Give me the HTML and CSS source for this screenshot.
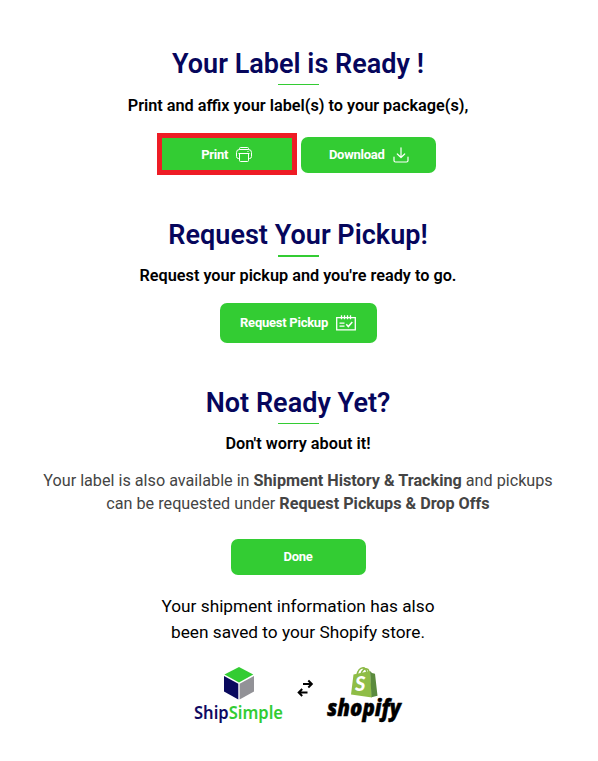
FILE: index.html
```
<!DOCTYPE html>
<html lang="en">
<head>
    <meta charset="UTF-8">
    <meta name="viewport" content="width=device-width, initial-scale=1.0">
    <title>Your Label is Ready</title>
    <link rel="stylesheet" href="styles.css">
</head>
<body>
<main class="page">
    <section class="block label-block">
        <h2 class="title">Your Label is Ready !</h2>
        <div class="line"></div>
        <p class="subtitle">Print and affix your label(s) to your package(s),</p>
        <div class="buttons">
            <button class="btn btn-print">
                <span class="btn-text">Print</span>
                <svg width="16" height="16" viewBox="0 0 16 16" fill="none" stroke="#fff" stroke-width="1">
                    <path d="M3.5 3.5v-1q0-1 1-1h7q1 0 1 1v1M3.5 12.5h-1q-2 0-2-2v-4q0-3 3-3h9q3 0 3 3v4q0 2-2 2h-1M2.5 7.5h11"/>
                    <path d="M3.5 7.5v7q0 1 1 1h7q1 0 1-1v-7M11.5 5.5h1"/>
                </svg>
            </button>
            <button class="btn btn-download">
                <span class="btn-text">Download</span>
                <svg width="16" height="16" viewBox="0 0 16 16" fill="none" stroke="#fff" stroke-width="1.2" stroke-linecap="round" stroke-linejoin="round">
                    <path d="M8 .8v9.6M4.3 7L8 10.5 11.7 7M1 10v3.5q0 1.5 1.5 1.5h11q1.5 0 1.5-1.5V10"/>
                </svg>
            </button>
        </div>
    </section>

    <section class="block pickup-block">
        <h2 class="title">Request Your Pickup!</h2>
        <div class="line line-thick"></div>
        <p class="subtitle">Request your pickup and you're ready to go.</p>
        <div class="buttons">
            <button class="btn btn-pickup">
                <span class="btn-text">Request Pickup</span>
                <svg width="20" height="16" viewBox="0 0 20 16" fill="none" stroke="#fff" stroke-width="1.3">
                    <path d="M.7 2.6h18.6v12.3H.7z"/>
                    <path d="M5.5.3v4M8.500.3v4M11.500.3v4M14.500.3v4M3.500 8.200h5M3.500 11.200h5"/>
                    <path d="M10.3 9.3l2 2.2 4-4.6" stroke-width="1.5"/>
                </svg>
            </button>
        </div>
    </section>

    <section class="block later-block">
        <h2 class="title">Not Ready Yet?</h2>
        <div class="line"></div>
        <p class="subtitle">Don't worry about it!</p>
        <p class="info">Your label is also available in <b>Shipment History &amp; Tracking</b> and pickups<br>can be requested under <b>Request Pickups &amp; Drop Offs</b></p>
        <div class="buttons">
            <button class="btn btn-done"><span class="btn-text">Done</span></button>
        </div>
    </section>

    <p class="saved">Your shipment information has also<br>been saved to your Shopify store.</p>

    <div class="logos">
        <svg class="logo-shipsimple" width="92" height="66" viewBox="0 0 92 66">
            <path fill="#3c3" d="M46 1l14.3 7.6L46 16.4 31.4 8.6z"/>
            <path fill="#0a0a5e" d="M31 10l14.3 7.7v15.8L31 25.6z"/>
            <path fill="#929297" d="M61 10l-14.4 7.7v15.8L61 25.6z"/>
            <text x="1" y="53" class="ship-text" textLength="89" lengthAdjust="spacingAndGlyphs"><tspan fill="#100a62">Ship</tspan><tspan fill="#3c3">Simple</tspan></text>
        </svg>
        <svg class="arrows" width="16" height="18" viewBox="0 0 16 18" fill="none" stroke="#000" stroke-width="2">
            <path d="M6 5h8.500M11.300 1.500L14.800 5l-3.500 3.500M10.500 13.500H2M5.200 10l-3.500 3.500L5.200 17"/>
        </svg>
        <svg class="logo-shopify" width="77" height="66" viewBox="0 0 77 66">
            <path fill="none" stroke="#8bb944" stroke-width="1.5" d="M31 9C32 4 35 2 37 1.800q3 0 4 5M35 8c1-4 4-6 6-5 2 .5 2 3 2 4"/>
            <path fill="#8fbd46" d="M27.500 8.500L44 5l2 26.500L25 28.500z"/>
            <path fill="#5b8b3d" d="M44 5l2 2 3 .8 2.500 22-6 1.500z"/>
            <text x="29" y="25" class="bag-text">S</text>
            <text x="1" y="50" class="shopify-text" textLength="74" lengthAdjust="spacingAndGlyphs">shopify</text>
        </svg>
    </div>
</main>
</body>
</html>
```
FILE: styles.css
```
body {
    margin: 0;
    background: #fff;
    font-family: Roboto, Arial, sans-serif;
    color: #000;
}

.page {
    width: 596px;
    padding-top: 46px;
    text-align: center;
}

.title {
    margin: 0;
    font-size: 27px;
    line-height: 36px;
    font-weight: 600;
    letter-spacing: 0.03px;
    color: #06065c;
}

.line {
    width: 41px;
    height: 1px;
    margin: 2px auto 0;
    background: #3c3;
}

.line-thick {
    height: 2px;
}

.subtitle {
    margin: 11px 0 0;
    font-size: 16.25px;
    line-height: 20px;
    font-weight: 600;
}

.buttons {
    display: flex;
    justify-content: center;
    gap: 4.5px;
    align-items: center;
}

.btn {
    display: flex;
    align-items: center;
    justify-content: center;
    gap: 8px;
    box-sizing: border-box;
    width: 135px;
    height: 36px;
    padding: 0;
    border: none;
    border-radius: 7px;
    background: #3c3;
    color: #fff;
    font-family: inherit;
    font-size: 13px;
    font-weight: 700;
    letter-spacing: -0.25px;
    cursor: pointer;
}

.label-block .buttons {
    margin: 17px 3px 0 0;
}

.btn-print {
    width: 140px;
    height: 42px;
    border: 5px solid #ee1c25;
    border-radius: 0;
}

.btn-download {
    margin-top: 2px;
}

.btn-download .btn-text,
.btn-done .btn-text {
    padding-bottom: 2px;
}

.pickup-block {
    margin-top: 42px;
}

.pickup-block .subtitle {
    margin-top: 9px;
}

.pickup-block .buttons {
    margin-top: 17px;
}

.btn-pickup {
    width: 157px;
    height: 40px;
}

.btn-pickup .btn-text {
    padding-bottom: 1px;
}

.later-block {
    margin-top: 42px;
}

.later-block .subtitle {
    margin-top: 10px;
}

.info {
    margin: 15px 0 24px;
    font-size: 16.2px;
    line-height: 23px;
    color: #444;
}

.saved {
    margin: 18px 0 0;
    font-size: 17.25px;
    line-height: 26px;
}

.logos {
    display: flex;
    justify-content: center;
    margin-top: 21px;
}

.logos svg {
    overflow: visible;
}

.arrows {
    margin: 13px 13px 0 12px;
}

.ship-text {
    font-family: "Noto Sans", sans-serif;
    font-size: 17px;
    font-weight: 600;
}

.bag-text {
    font-family: Lato, sans-serif;
    font-size: 20px;
    font-weight: 900;
    font-style: italic;
    fill: #fff;
}

.shopify-text {
    font-family: "Open Sans", sans-serif;
    font-size: 22px;
    font-weight: 800;
    font-style: italic;
    fill: #000;
    stroke: #000;
    stroke-width: 0.4px;
}
```
